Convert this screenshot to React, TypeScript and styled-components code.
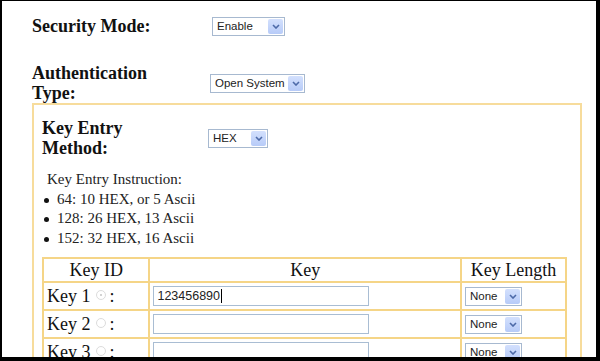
import styled, { createGlobalStyle } from 'styled-components';

const GlobalStyle = createGlobalStyle`
  html, body {
    margin: 0;
    padding: 0;
    background: #000;
  }
`;

const Frame = styled.div`
  width: 600px;
  height: 361px;
  box-sizing: border-box;
  padding: 1px 4px 4px 2px;
  background: #000;
`;

const Page = styled.div`
  height: 100%;
  box-sizing: border-box;
  overflow: hidden;
  background: #fff;
  padding: 15px 0 0 30px;
  font-family: "Liberation Serif", "Times New Roman", serif;
  color: #111;
`;

const FieldRow = styled.div<{ $labelWidth: number; $space?: number }>`
  display: grid;
  grid-template-columns: ${(p) => p.$labelWidth}px auto;
  align-items: center;
  justify-items: start;
  margin-bottom: ${(p) => p.$space ?? 0}px;
`;

const Label = styled.div`
  width: 130px;
  font-size: 18px;
  font-weight: bold;
  line-height: 20px;
`;

const SelectBox = styled.div<{ $width: number }>`
  display: flex;
  align-items: center;
  justify-content: space-between;
  width: ${(p) => p.$width}px;
  height: 19px;
  box-sizing: border-box;
  border: 1px solid #a7b9d0;
  background: #fff;
  padding: 0 1px 0 4px;
  font-family: "Liberation Sans", Arial, sans-serif;
  font-size: 11.5px;
  color: #222;
  white-space: nowrap;
`;

const ArrowButton = styled.span`
  display: flex;
  align-items: center;
  justify-content: center;
  flex: none;
  width: 15px;
  height: 15px;
  border-radius: 2px;
  background: linear-gradient(#d3e0fd, #b7cbf8);
`;

const Select = ({ value, width }: { value: string; width: number }) => (
  <SelectBox $width={width}>
    <span>{value}</span>
    <ArrowButton>
      <svg width="8" height="5" viewBox="0 0 8 5">
        <path d="M1 1 L4 4 L7 1" fill="none" stroke="#4d6aa8" strokeWidth="1.6" />
      </svg>
    </ArrowButton>
  </SelectBox>
);

const KeyBox = styled.div`
  width: 550px;
  box-sizing: border-box;
  border: 2px solid #f7dc9c;
  border-bottom: none;
  padding: 13px 0 40px 8px;
`;

const Instructions = styled.div`
  margin-top: 12px;
  padding-left: 5px;
  font-size: 15px;
  line-height: 19.5px;
  color: #222;
`;

const BulletList = styled.ul`
  list-style: none;
  margin: 0;
  padding: 0;
`;

const Bullet = styled.li`
  position: relative;
  padding-left: 10px;

  &::before {
    content: '';
    position: absolute;
    left: -3px;
    top: 8px;
    width: 5px;
    height: 5px;
    border-radius: 50%;
    background: #111;
  }
`;

const KeyTable = styled.table`
  margin-top: 9px;
  width: 525px;
  border-collapse: separate;
  border-spacing: 0;
  border: 1px solid #f5d587;
  font-size: 18px;
`;

const HeadCell = styled.th<{ $width: number }>`
  width: ${(p) => p.$width}px;
  height: 22px;
  padding: 0;
  border: 1px solid #f5d587;
  font-weight: normal;
  text-align: center;
  line-height: 20px;
`;

const Cell = styled.td`
  height: 26px;
  padding: 0 3px;
  border: 1px solid #f5d587;
  line-height: 20px;
  white-space: nowrap;
`;

const Radio = styled.span<{ $checked?: boolean }>`
  position: relative;
  display: inline-block;
  width: 8px;
  height: 8px;
  margin: 0 4px 0 5px;
  border: 1px solid #dcdcdc;
  border-radius: 50%;
  vertical-align: 2px;

  &::after {
    content: '';
    display: ${(p) => (p.$checked ? 'block' : 'none')};
    position: absolute;
    left: 3px;
    top: 3px;
    width: 2px;
    height: 2px;
    border-radius: 50%;
    background: #c4c4c4;
  }
`;

const TextInput = styled.div`
  display: flex;
  align-items: center;
  width: 216px;
  height: 20px;
  box-sizing: border-box;
  border: 1px solid #a9bdd3;
  padding-left: 3px;
  font-family: "Liberation Sans", Arial, sans-serif;
  font-size: 12.5px;
  color: #222;
`;

const Caret = styled.span`
  display: inline-block;
  width: 1px;
  height: 14px;
  margin-left: 1px;
  background: #000;
`;

const keys = [
  { id: 1, value: '123456890', checked: true },
  { id: 2, value: '', checked: false },
  { id: 3, value: '', checked: false },
];

export default function App() {
  return (
    <Frame>
      <GlobalStyle />
      <Page>
        <FieldRow $labelWidth={180} $space={27}>
          <Label>Security Mode:</Label>
          <Select value="Enable" width={73} />
        </FieldRow>
        <FieldRow $labelWidth={178}>
          <Label>Authentication Type:</Label>
          <Select value="Open System" width={95} />
        </FieldRow>
        <KeyBox>
          <FieldRow $labelWidth={166}>
            <Label>Key Entry Method:</Label>
            <Select value="HEX" width={60} />
          </FieldRow>
          <Instructions>
            Key Entry Instruction:
            <BulletList>
              <Bullet>64: 10 HEX, or 5 Ascii</Bullet>
              <Bullet>128: 26 HEX, 13 Ascii</Bullet>
              <Bullet>152: 32 HEX, 16 Ascii</Bullet>
            </BulletList>
          </Instructions>
          <KeyTable>
            <thead>
              <tr>
                <HeadCell $width={106}>Key ID</HeadCell>
                <HeadCell $width={314}>Key</HeadCell>
                <HeadCell $width={105}>Key Length</HeadCell>
              </tr>
            </thead>
            <tbody>
              {keys.map((k) => (
                <tr key={k.id}>
                  <Cell>
                    Key {k.id}
                    <Radio $checked={k.checked} />:
                  </Cell>
                  <Cell>
                    <TextInput>
                      {k.value}
                      {k.checked && <Caret />}
                    </TextInput>
                  </Cell>
                  <Cell>
                    <Select value="None" width={57} />
                  </Cell>
                </tr>
              ))}
            </tbody>
          </KeyTable>
        </KeyBox>
      </Page>
    </Frame>
  );
}
